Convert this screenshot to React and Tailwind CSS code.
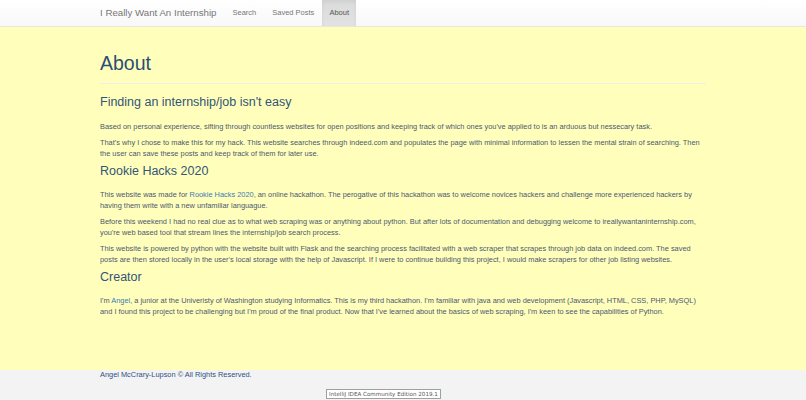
export default function App() {
  const navLinks = [
    { label: 'Search', active: false },
    { label: 'Saved Posts', active: false },
    { label: 'About', active: true },
  ]

  return (
    <div className="w-[806px] h-[400px] overflow-hidden flex flex-col bg-[#f3f3f3] font-['Liberation_Sans',Arial,sans-serif]">
      {/* navbar */}
      <div className="h-[27px] shrink-0 flex bg-gradient-to-b from-white to-[#f8f8f8] border-b border-[#e7e7e7] shadow-[0_1px_3px_rgba(0,0,0,0.06)]">
        <div className="w-[622px] mx-auto flex items-stretch px-[8px]">
          <a className="flex items-center pr-[8px] text-[9.7px] text-[#777]">I Really Want An Internship</a>
          {navLinks.map((l) => (
            <a
              key={l.label}
              className={
                l.active
                  ? 'flex items-center px-[7px] text-[7.5px] text-[#555] bg-gradient-to-b from-[#dbdbdb] to-[#e2e2e2] shadow-[inset_0_2px_4px_rgba(0,0,0,0.06)]'
                  : 'flex items-center px-[8px] text-[7.5px] text-[#777]'
              }
            >
              {l.label}
            </a>
          ))}
        </div>
      </div>

      {/* main */}
      <div className="h-[343px] shrink-0 bg-[#ffffbb]">
        <div className="w-[622px] mx-auto px-[8px] flex flex-col text-[7.4px] leading-[11px] text-[#4b5870]">
          <h1 className="mt-[25.5px] pb-[9.5px] border-b border-[#eeeeee] text-[19.5px] leading-[21px] text-[#2a4f76]">About</h1>
          <h3 className="mt-[11px] text-[12.5px] leading-[14px] text-[#33557a]">Finding an internship/job isn't easy</h3>
          <p className="mt-[11.5px]">
            Based on personal experience, sifting through countless websites for open positions and keeping track of which ones you've applied to is an arduous but nessecary task.
          </p>
          <p className="mt-[5px]">
            That's why I chose to make this for my hack. This website searches through indeed.com and populates the page with minimal information to lessen the mental strain of searching. Then the user can save these posts and keep track of them for later use.
          </p>
          <h3 className="mt-[5.5px] text-[12.5px] leading-[14px] text-[#33557a]">Rookie Hacks 2020</h3>
          <p className="mt-[10.5px]">
            This website was made for <a className="text-[#3a7ab5]">Rookie Hacks 2020</a>, an online hackathon. The perogative of this hackathon was to welcome novices hackers and challenge more experienced hackers by having them write with a new unfamiliar languague.
          </p>
          <p className="mt-[5px]">
            Before this weekend I had no real clue as to what web scraping was or anything about python. But after lots of documentation and debugging welcome to ireallywantaninternship.com, you're web based tool that stream lines the internship/job search process.
          </p>
          <p className="mt-[5px]">
            This website is powered by python with the website built with Flask and the searching process facilitated with a web scraper that scrapes through job data on indeed.com. The saved posts are then stored locally in the user's local storage with the help of Javascript. If I were to continue building this project, I would make scrapers for other job listing websites.
          </p>
          <h3 className="mt-[5.5px] text-[12.5px] leading-[14px] text-[#33557a]">Creator</h3>
          <p className="mt-[10.5px]">
            I'm <a className="text-[#3a7ab5]">Angel</a>, a junior at the Univeristy of Washington studying Informatics. This is my third hackathon. I'm familiar with java and web development (Javascript, HTML, CSS, PHP, MySQL) and I found this project to be challenging but I'm proud of the final product. Now that I've learned about the basics of web scraping, I'm keen to see the capabilities of Python.
          </p>
        </div>
      </div>

      {/* footer */}
      <div className="flex-1 flex flex-col">
        <div className="w-[622px] mx-auto px-[8px] -mt-[1px] text-[7.4px] leading-[11px] text-[#2f4f86]">
          Angel McCrary-Lupson © All Rights Reserved.
        </div>
        <div className="mt-[9px] ml-[326px] w-fit px-[2px] bg-white border border-[#a0a0a0] text-[5.6px] leading-[8px] text-[#555] font-['DejaVu_Sans',sans-serif]">
          IntelliJ IDEA Community Edition 2019.1
        </div>
      </div>
    </div>
  )
}
